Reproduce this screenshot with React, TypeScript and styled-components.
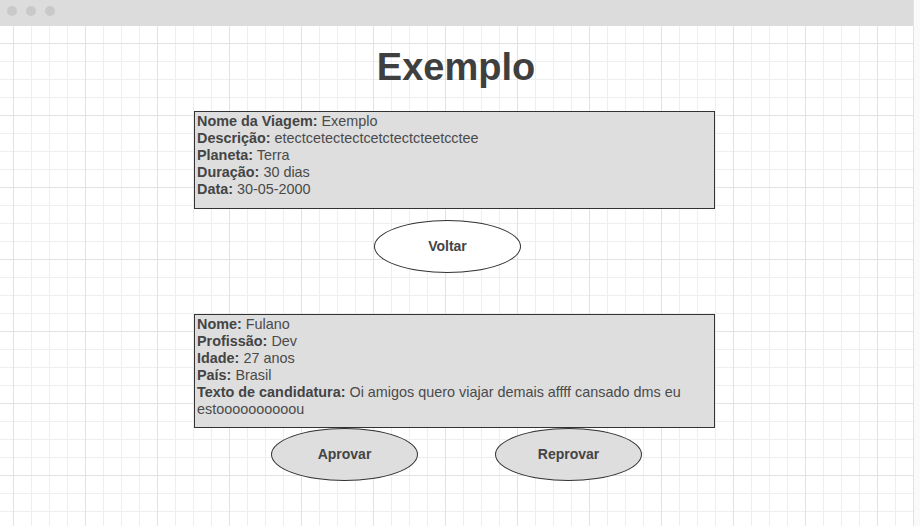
import React from 'react';
import styled, { createGlobalStyle } from 'styled-components';

const GlobalStyle = createGlobalStyle`
  html, body {
    margin: 0;
    padding: 0;
    background: #fafafa;
  }
  body {
    font-family: "Liberation Sans", Arial, sans-serif;
    color: #444444;
  }
`;

const Window = styled.div`
  display: flex;
  flex-direction: column;
  width: 913px;
  height: 526px;
  border-right: 1px solid #e2e2e2;
  overflow: hidden;
`;

const TitleBar = styled.div`
  display: flex;
  align-items: center;
  gap: 9px;
  height: 26px;
  padding: 0 0 4px 7px;
  box-sizing: border-box;
  background: #dcdcdc;
  flex-shrink: 0;
`;

const Dot = styled.span`
  width: 10px;
  height: 10px;
  border-radius: 50%;
  background: #c9c9c9;
`;

const Canvas = styled.div`
  flex: 1;
  display: flex;
  flex-direction: column;
  align-items: center;
  padding-right: 4px;
  background-color: #ffffff;
  background-image:
    linear-gradient(to right, #e2e2e2 1px, transparent 1px),
    linear-gradient(to bottom, #e2e2e2 1px, transparent 1px),
    linear-gradient(to right, #eeeeee 1px, transparent 1px),
    linear-gradient(to bottom, #eeeeee 1px, transparent 1px);
  background-size: 72px 72px, 72px 72px, 18px 18px, 18px 18px;
  background-position: 13px 17px;
`;

const Title = styled.h1`
  margin: 19px 0 0 3px;
  font-size: 38px;
  line-height: 44px;
  font-weight: 700;
  color: #3f3f3f;
`;

const InfoBox = styled.div<{ $top: number; $bottom: number }>`
  width: 521px;
  box-sizing: border-box;
  margin-top: ${(p) => p.$top}px;
  padding: 1px 2px ${(p) => p.$bottom}px;
  border: 1px solid #333333;
  background: #dedede;
  font-size: 14.4px;
  line-height: 17px;
  color: #4a4a4a;
`;

const Line = styled.div``;

const Label = styled.b`
  font-weight: 700;
  color: #444444;
`;

const ActionRow = styled.div<{ $top: number; $shift: number }>`
  display: flex;
  gap: 77px;
  margin-top: ${(p) => p.$top}px;
  margin-left: ${(p) => p.$shift}px;
`;

const Pill = styled.button<{ $filled?: boolean }>`
  width: 147px;
  height: 53px;
  border: 1px solid #333333;
  border-radius: 50%;
  background: ${(p) => (p.$filled ? '#dedede' : '#ffffff')};
  font-family: "Liberation Sans", Arial, sans-serif;
  font-size: 14px;
  font-weight: 700;
  color: #444444;
  padding: 0 0 2px;
  cursor: pointer;
`;

const trip = [
  ['Nome da Viagem:', 'Exemplo'],
  ['Descrição:', 'etectcetectectcetctectcteetcctee'],
  ['Planeta:', 'Terra'],
  ['Duração:', '30 dias'],
  ['Data:', '30-05-2000'],
];

const candidate = [
  ['Nome:', 'Fulano'],
  ['Profissão:', 'Dev'],
  ['Idade:', '27 anos'],
  ['País:', 'Brasil'],
  ['Texto de candidatura:', 'Oi amigos quero viajar demais affff cansado dms eu estoooooooooou'],
];

const App: React.FC = () => {
  return (
    <>
      <GlobalStyle />
      <Window>
        <TitleBar>
          <Dot />
          <Dot />
          <Dot />
        </TitleBar>
        <Canvas>
          <Title>Exemplo</Title>

          <InfoBox $top={22} $bottom={10}>
            {trip.map(([label, value]) => (
              <Line key={label}>
                <Label>{label}</Label> {value}
              </Line>
            ))}
          </InfoBox>

          <ActionRow $top={11} $shift={-14}>
            <Pill>Voltar</Pill>
          </ActionRow>

          <InfoBox $top={41} $bottom={9}>
            {candidate.map(([label, value]) => (
              <Line key={label}>
                <Label>{label}</Label> {value}
              </Line>
            ))}
          </InfoBox>

          <ActionRow $top={0} $shift={4}>
            <Pill $filled>Aprovar</Pill>
            <Pill $filled>Reprovar</Pill>
          </ActionRow>
        </Canvas>
      </Window>
    </>
  );
};

export default App;
